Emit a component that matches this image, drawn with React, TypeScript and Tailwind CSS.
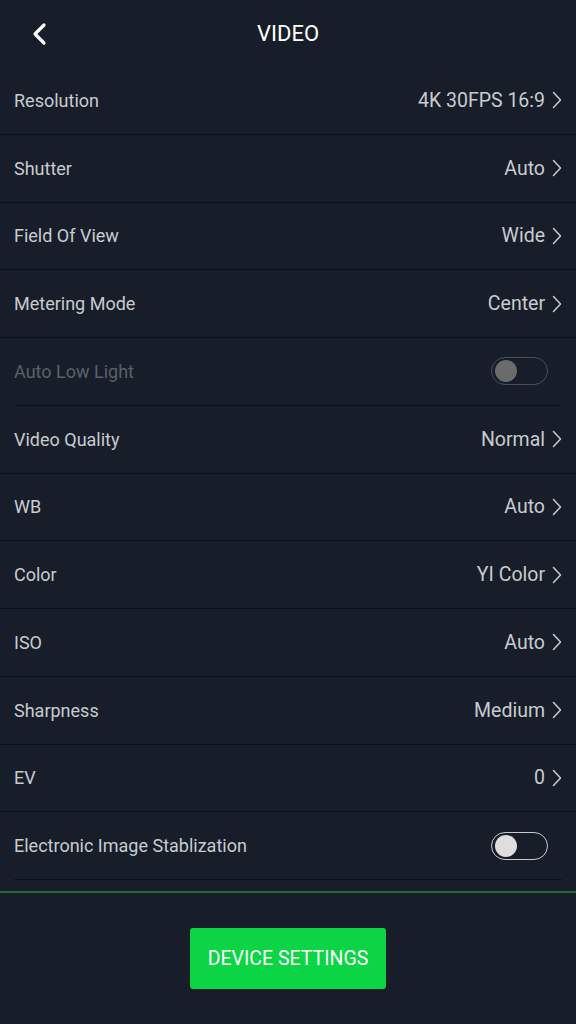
import React from "react";

const Chevron = () => (
  <svg width="10" height="18" viewBox="0 0 10 18" className="ml-[7px] shrink-0">
    <path d="M1.5 1.5 L8.5 9 L1.5 16.5" fill="none" stroke="#c9cbcf" strokeWidth="1.5" strokeLinecap="round" strokeLinejoin="round" />
  </svg>
);

type Row = { label: string; value?: string; toggle?: "disabled" | "off"; inset?: boolean; dim?: boolean };

const rows: Row[] = [
  { label: "Resolution", value: "4K 30FPS 16:9" },
  { label: "Shutter", value: "Auto" },
  { label: "Field Of View", value: "Wide" },
  { label: "Metering Mode", value: "Center" },
  { label: "Auto Low Light", toggle: "disabled", inset: true, dim: true },
  { label: "Video Quality", value: "Normal" },
  { label: "WB", value: "Auto" },
  { label: "Color", value: "YI Color" },
  { label: "ISO", value: "Auto" },
  { label: "Sharpness", value: "Medium" },
  { label: "EV", value: "0" },
  { label: "Electronic Image Stablization", toggle: "off", inset: true },
];

const Toggle = ({ kind }: { kind: "disabled" | "off" }) => (
  <div
    className={
      "mr-[28px] flex h-[28px] w-[57px] items-center rounded-full border-[1.5px] px-[3px] " +
      (kind === "disabled" ? "border-[#4a4f57]" : "border-[#c8cacd]")
    }
  >
    <div className={"h-[22px] w-[22px] rounded-full " + (kind === "disabled" ? "bg-[#6b6b6b]" : "bg-[#dedede]")} />
  </div>
);

export default function App() {
  return (
    <div className="flex min-h-[1024px] w-[576px] flex-col bg-[#171e29] font-['Roboto',sans-serif]">
      <div className="relative flex h-[67px] items-center justify-center">
        <svg width="16" height="24" viewBox="0 0 16 24" className="absolute left-[31px] top-[22px]">
          <path d="M13 3 L4 12 L13 21" fill="none" stroke="#ffffff" strokeWidth="3.2" strokeLinecap="round" strokeLinejoin="round" />
        </svg>
        <span className="text-[22px] text-white">VIDEO</span>
      </div>
      {rows.map((r) => (
        <div key={r.label} className="flex flex-col">
          <div className="flex h-[66.75px] items-center justify-between pl-[14px]">
            <span className={"text-[18px] " + (r.dim ? "text-[#5b6068]" : "text-[#c9cbcf]")}>{r.label}</span>
            {r.toggle ? (
              <Toggle kind={r.toggle} />
            ) : (
              <div className="flex items-center pr-[14px]">
                <span className="text-[19.5px] text-[#c9cbcf]">{r.value}</span>
                <Chevron />
              </div>
            )}
          </div>
          <div className={"h-px bg-[#0d1118] " + (r.inset ? "mx-[14px]" : "")} />
        </div>
      ))}
      <div className="mt-[11px] h-[2px] bg-[#1c6b37]" />
      <div className="flex justify-center pt-[35px]">
        <button className="flex h-[61px] w-[196px] items-center justify-center rounded-[3px] bg-[#0bd545] text-[19.5px] text-white">
          DEVICE SETTINGS
        </button>
      </div>
    </div>
  );
}
